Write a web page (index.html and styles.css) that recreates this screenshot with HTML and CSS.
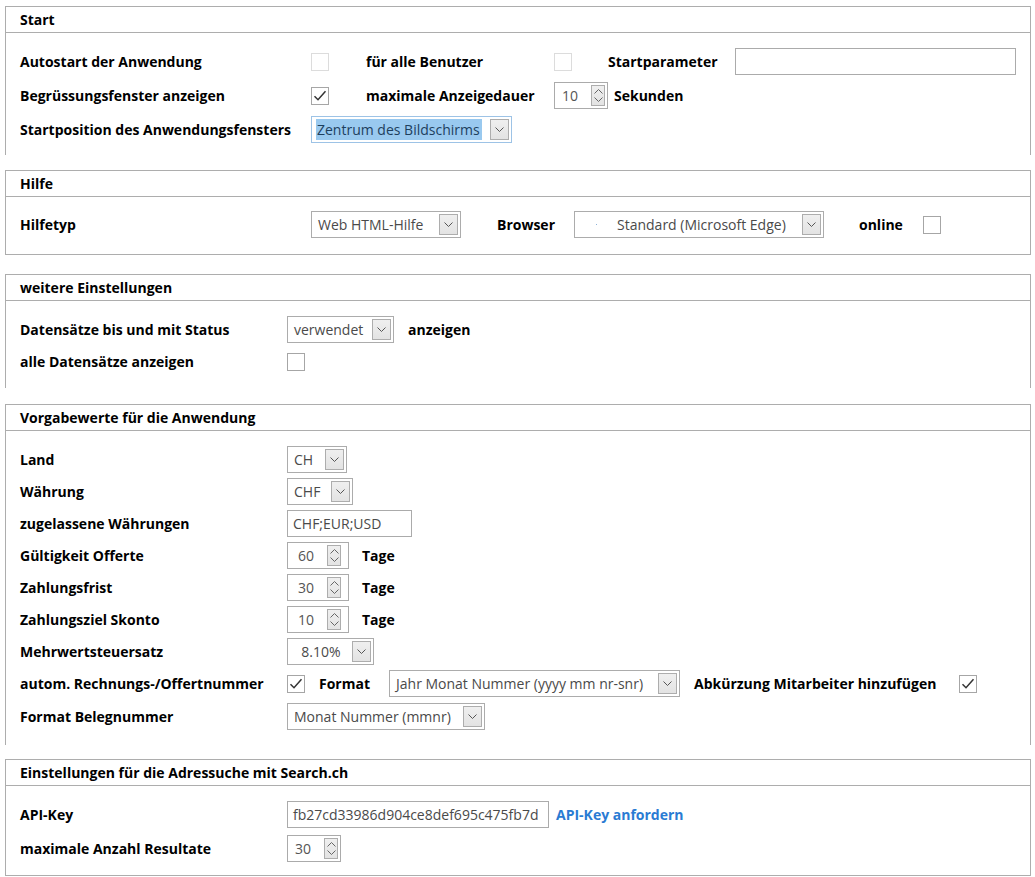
FILE: index.html
```html
<!DOCTYPE html>
<html lang="de">
<head>
<meta charset="utf-8">
<title>Einstellungen</title>
<link rel="stylesheet" href="styles.css">
</head>
<body>

<section class="group open-bottom g1">
  <div class="group-head">Start</div>
  <div class="group-body start-grid">
    <span class="lbl">Autostart der Anwendung</span>
    <span class="chk disabled"></span>
    <span class="lbl">für alle Benutzer</span>
    <span class="chk disabled"></span>
    <span class="lbl">Startparameter</span>
    <span class="input w-281"></span>

    <span class="lbl">Begrüssungsfenster anzeigen</span>
    <span class="chk"><svg width="16" height="16" viewBox="0 0 16 16"><path d="M2.5 8.2 L6 11.7 L13.5 3.2" fill="none" stroke="#333" stroke-width="1.5"/></svg></span>
    <span class="lbl">maximale Anzeigedauer</span>
    <div class="spin w-54"><span class="spin-text">10</span><span class="spin-btn"><svg width="9" height="5" viewBox="0 0 9 5"><path d="M0.5 4.5 L4.5 0.5 L8.5 4.5" fill="none" stroke="#666" stroke-width="1"/></svg><svg width="9" height="5" viewBox="0 0 9 5"><path d="M0.5 0.5 L4.5 4.5 L8.5 0.5" fill="none" stroke="#666" stroke-width="1"/></svg></span></div>
    <span class="lbl ml-6">Sekunden</span>
    <span></span>

    <span class="lbl">Startposition des Anwendungsfensters</span>
    <div class="combo focus w-201 span-4"><span class="combo-text"><span class="sel">Zentrum des Bildschirms</span></span><span class="combo-btn"><svg width="9" height="5" viewBox="0 0 9 5"><path d="M0.5 0.5 L4.5 4.5 L8.5 0.5" fill="none" stroke="#555" stroke-width="1"/></svg></span></div>
  </div>
</section>

<section class="group g2">
  <div class="group-head">Hilfe</div>
  <div class="group-body body-hilfe">
    <div class="row">
      <span class="lbl lw-291">Hilfetyp</span>
      <div class="combo w-150"><span class="combo-text">Web HTML-Hilfe</span><span class="combo-btn"><svg width="9" height="5" viewBox="0 0 9 5"><path d="M0.5 0.5 L4.5 4.5 L8.5 0.5" fill="none" stroke="#555" stroke-width="1"/></svg></span></div>
      <span class="lbl lw-browser">Browser</span>
      <div class="combo w-250"><span class="combo-text browser-text"><span class="dot"></span>Standard (Microsoft Edge)</span><span class="combo-btn"><svg width="9" height="5" viewBox="0 0 9 5"><path d="M0.5 0.5 L4.5 4.5 L8.5 0.5" fill="none" stroke="#555" stroke-width="1"/></svg></span></div>
      <span class="lbl lw-online">online</span>
      <span class="chk"></span>
    </div>
  </div>
</section>

<section class="group open-bottom g3">
  <div class="group-head">weitere Einstellungen</div>
  <div class="group-body body-rows5">
    <div class="row">
      <span class="lbl lw-267">Datensätze bis und mit Status</span>
      <div class="combo w-107"><span class="combo-text">verwendet</span><span class="combo-btn"><svg width="9" height="5" viewBox="0 0 9 5"><path d="M0.5 0.5 L4.5 4.5 L8.5 0.5" fill="none" stroke="#555" stroke-width="1"/></svg></span></div>
      <span class="lbl ml-14">anzeigen</span>
    </div>
    <div class="row">
      <span class="lbl lw-267">alle Datensätze anzeigen</span>
      <span class="chk"></span>
    </div>
  </div>
</section>

<section class="group open-bottom g4">
  <div class="group-head">Vorgabewerte für die Anwendung</div>
  <div class="group-body body-rows5">
    <div class="row">
      <span class="lbl lw-267">Land</span>
      <div class="combo w-60"><span class="combo-text">CH</span><span class="combo-btn"><svg width="9" height="5" viewBox="0 0 9 5"><path d="M0.5 0.5 L4.5 4.5 L8.5 0.5" fill="none" stroke="#555" stroke-width="1"/></svg></span></div>
    </div>
    <div class="row">
      <span class="lbl lw-267">Währung</span>
      <div class="combo w-66"><span class="combo-text">CHF</span><span class="combo-btn"><svg width="9" height="5" viewBox="0 0 9 5"><path d="M0.5 0.5 L4.5 4.5 L8.5 0.5" fill="none" stroke="#555" stroke-width="1"/></svg></span></div>
    </div>
    <div class="row">
      <span class="lbl lw-267">zugelassene Währungen</span>
      <span class="input w-125">CHF;EUR;USD</span>
    </div>
    <div class="row">
      <span class="lbl lw-267">Gültigkeit Offerte</span>
      <div class="spin w-62 wide"><span class="spin-text">60</span><span class="spin-btn"><svg width="9" height="5" viewBox="0 0 9 5"><path d="M0.5 4.5 L4.5 0.5 L8.5 4.5" fill="none" stroke="#666" stroke-width="1"/></svg><svg width="9" height="5" viewBox="0 0 9 5"><path d="M0.5 0.5 L4.5 4.5 L8.5 0.5" fill="none" stroke="#666" stroke-width="1"/></svg></span></div>
      <span class="lbl ml-13">Tage</span>
    </div>
    <div class="row">
      <span class="lbl lw-267">Zahlungsfrist</span>
      <div class="spin w-62 wide"><span class="spin-text">30</span><span class="spin-btn"><svg width="9" height="5" viewBox="0 0 9 5"><path d="M0.5 4.5 L4.5 0.5 L8.5 4.5" fill="none" stroke="#666" stroke-width="1"/></svg><svg width="9" height="5" viewBox="0 0 9 5"><path d="M0.5 0.5 L4.5 4.5 L8.5 0.5" fill="none" stroke="#666" stroke-width="1"/></svg></span></div>
      <span class="lbl ml-13">Tage</span>
    </div>
    <div class="row">
      <span class="lbl lw-267">Zahlungsziel Skonto</span>
      <div class="spin w-62 wide"><span class="spin-text">10</span><span class="spin-btn"><svg width="9" height="5" viewBox="0 0 9 5"><path d="M0.5 4.5 L4.5 0.5 L8.5 4.5" fill="none" stroke="#666" stroke-width="1"/></svg><svg width="9" height="5" viewBox="0 0 9 5"><path d="M0.5 0.5 L4.5 4.5 L8.5 0.5" fill="none" stroke="#666" stroke-width="1"/></svg></span></div>
      <span class="lbl ml-13">Tage</span>
    </div>
    <div class="row">
      <span class="lbl lw-267">Mehrwertsteuersatz</span>
      <div class="combo w-87"><span class="combo-text center">8.10%</span><span class="combo-btn"><svg width="9" height="5" viewBox="0 0 9 5"><path d="M0.5 0.5 L4.5 4.5 L8.5 0.5" fill="none" stroke="#555" stroke-width="1"/></svg></span></div>
    </div>
    <div class="row">
      <span class="lbl lw-267">autom. Rechnungs-/Offertnummer</span>
      <span class="chk"><svg width="16" height="16" viewBox="0 0 16 16"><path d="M2.5 8.2 L6 11.7 L13.5 3.2" fill="none" stroke="#333" stroke-width="1.5"/></svg></span>
      <span class="lbl lw-format">Format</span>
      <div class="combo w-291"><span class="combo-text">Jahr Monat Nummer (yyyy mm nr-snr)</span><span class="combo-btn"><svg width="9" height="5" viewBox="0 0 9 5"><path d="M0.5 0.5 L4.5 4.5 L8.5 0.5" fill="none" stroke="#555" stroke-width="1"/></svg></span></div>
      <span class="lbl lw-abk">Abkürzung Mitarbeiter hinzufügen</span>
      <span class="chk"><svg width="16" height="16" viewBox="0 0 16 16"><path d="M2.5 8.2 L6 11.7 L13.5 3.2" fill="none" stroke="#333" stroke-width="1.5"/></svg></span>
    </div>
    <div class="row mt-1">
      <span class="lbl lw-267">Format Belegnummer</span>
      <div class="combo w-198"><span class="combo-text">Monat Nummer (mmnr)</span><span class="combo-btn"><svg width="9" height="5" viewBox="0 0 9 5"><path d="M0.5 0.5 L4.5 4.5 L8.5 0.5" fill="none" stroke="#555" stroke-width="1"/></svg></span></div>
    </div>
  </div>
</section>

<section class="group g5">
  <div class="group-head">Einstellungen für die Adressuche mit Search.ch</div>
  <div class="group-body body-rows7">
    <div class="row">
      <span class="lbl lw-267">API-Key</span>
      <span class="input w-262">fb27cd33986d904ce8def695c475fb7d</span>
      <a class="link" href="#">API-Key anfordern</a>
    </div>
    <div class="row">
      <span class="lbl lw-267">maximale Anzahl Resultate</span>
      <div class="spin w-54"><span class="spin-text">30</span><span class="spin-btn"><svg width="9" height="5" viewBox="0 0 9 5"><path d="M0.5 4.5 L4.5 0.5 L8.5 4.5" fill="none" stroke="#666" stroke-width="1"/></svg><svg width="9" height="5" viewBox="0 0 9 5"><path d="M0.5 0.5 L4.5 4.5 L8.5 0.5" fill="none" stroke="#666" stroke-width="1"/></svg></span></div>
    </div>
  </div>
</section>

</body>
</html>
```

FILE: styles.css
```css
* { box-sizing: border-box; }

body {
  margin: 0;
  padding: 6px 4px 0 5px;
  font-family: "Open Sans", "Noto Sans", "DejaVu Sans", sans-serif;
  font-size: 14px;
  color: #000;
  background: #fff;
}

.group {
  border: 1px solid #adadad;
}
.group.open-bottom { border-bottom: none; }
.g2 { margin-top: 15px; }
.g3 { margin-top: 19px; }
.g4 { margin-top: 16px; }
.g5 { margin-top: 14px; }

.group-head {
  height: 26px;
  border-bottom: 1px solid #adadad;
  padding-left: 14px;
  font-weight: 700;
  display: flex;
  align-items: center;
  white-space: nowrap;
}

.group-body {
  padding: 15px 14px 12px 14px;
}

.start-grid {
  display: grid;
  grid-template-columns: 291px 55px 188px 54px 127px 281px;
  grid-auto-rows: 27px;
  row-gap: 7px;
  align-items: center;
}
.span-4 { grid-column: span 4; }

.body-hilfe { padding: 14px 14px 16px 14px; }
.body-rows5 { padding: 15px 14px 13px 14px; display: flex; flex-direction: column; gap: 5px; }
.g4 .body-rows5 { padding-bottom: 15px; }
.body-rows7 { padding: 15px 14px 13px 14px; display: flex; flex-direction: column; gap: 7px; }

.row {
  display: flex;
  align-items: center;
  height: 27px;
}
.mt-1 { margin-top: 1px; }

.lbl { font-weight: 700; white-space: nowrap; }
.lw-291 { width: 291px; flex: none; }
.lw-267 { width: 267px; flex: none; }
.lw-browser { width: 77px; margin-left: 36px; flex: none; }
.lw-online { width: 64px; margin-left: 35px; flex: none; }
.lw-format { width: 70px; margin-left: 14px; flex: none; }
.lw-abk { width: 265px; margin-left: 14px; flex: none; }
.ml-6 { margin-left: 6px; }
.ml-13 { margin-left: 13px; }
.ml-14 { margin-left: 14px; }

/* checkbox */
.chk {
  width: 18px;
  height: 18px;
  border: 1px solid #a6a6a6;
  background: #fff;
  display: flex;
  align-items: center;
  justify-content: center;
  flex: none;
}
.chk.disabled { border-color: #dcdcdc; }

/* text input */
.input {
  height: 27px;
  border: 1px solid #ababab;
  background: #fff;
  color: #4a4a4a;
  padding-left: 5px;
  display: flex;
  align-items: center;
  white-space: nowrap;
  overflow: hidden;
  flex: none;
}

/* combo */
.combo {
  height: 27px;
  border: 1px solid #acacac;
  background: #fff;
  padding: 2px;
  display: flex;
  flex: none;
}
.combo-text {
  flex: 1;
  min-width: 0;
  padding-left: 4px;
  display: flex;
  align-items: center;
  color: #4a4a4a;
  white-space: nowrap;
  overflow: hidden;
}
.combo-text.center { justify-content: center; padding-left: 0; }
.combo-btn {
  width: 19px;
  flex: none;
  border: 1px solid #adadad;
  background: linear-gradient(#efefef, #e3e3e3);
  display: flex;
  align-items: center;
  justify-content: center;
}
.combo.focus { border-color: #9dc3e6; }
.combo.focus .combo-text { padding-left: 2px; }
.sel {
  background: #99c9ef;
  color: #1d3f5e;
  height: 21px;
  display: flex;
  align-items: center;
  padding: 0 2px 0 1px;
}
.browser-text { padding-left: 19px; }
.dot {
  width: 1px;
  height: 1px;
  background: #8fb3d9;
  margin-right: 20px;
}

/* spinner */
.spin {
  height: 27px;
  border: 1px solid #ababab;
  background: #fff;
  padding: 2px;
  display: flex;
  flex: none;
}
.spin.wide { padding-right: 7px; }
.spin-text {
  flex: 1;
  padding-left: 5px;
  display: flex;
  align-items: center;
  color: #555;
}
.spin.wide .spin-text { padding-left: 8px; }
.spin-btn {
  width: 14px;
  flex: none;
  border: 1px solid #adadad;
  background: linear-gradient(#efefef, #e3e3e3);
  display: flex;
  flex-direction: column;
  align-items: center;
  justify-content: space-evenly;
}

.w-54 { width: 54px; }
.w-60 { width: 60px; }
.w-62 { width: 62px; }
.w-66 { width: 66px; }
.w-87 { width: 87px; }
.w-107 { width: 107px; }
.w-125 { width: 125px; }
.w-150 { width: 150px; }
.w-198 { width: 198px; }
.w-201 { width: 201px; }
.w-250 { width: 250px; }
.w-262 { width: 262px; }
.w-281 { width: 281px; }
.w-291 { width: 291px; }

.link {
  margin-left: 7px;
  color: #2a7bd3;
  font-weight: 700;
  text-decoration: none;
  white-space: nowrap;
}
```
